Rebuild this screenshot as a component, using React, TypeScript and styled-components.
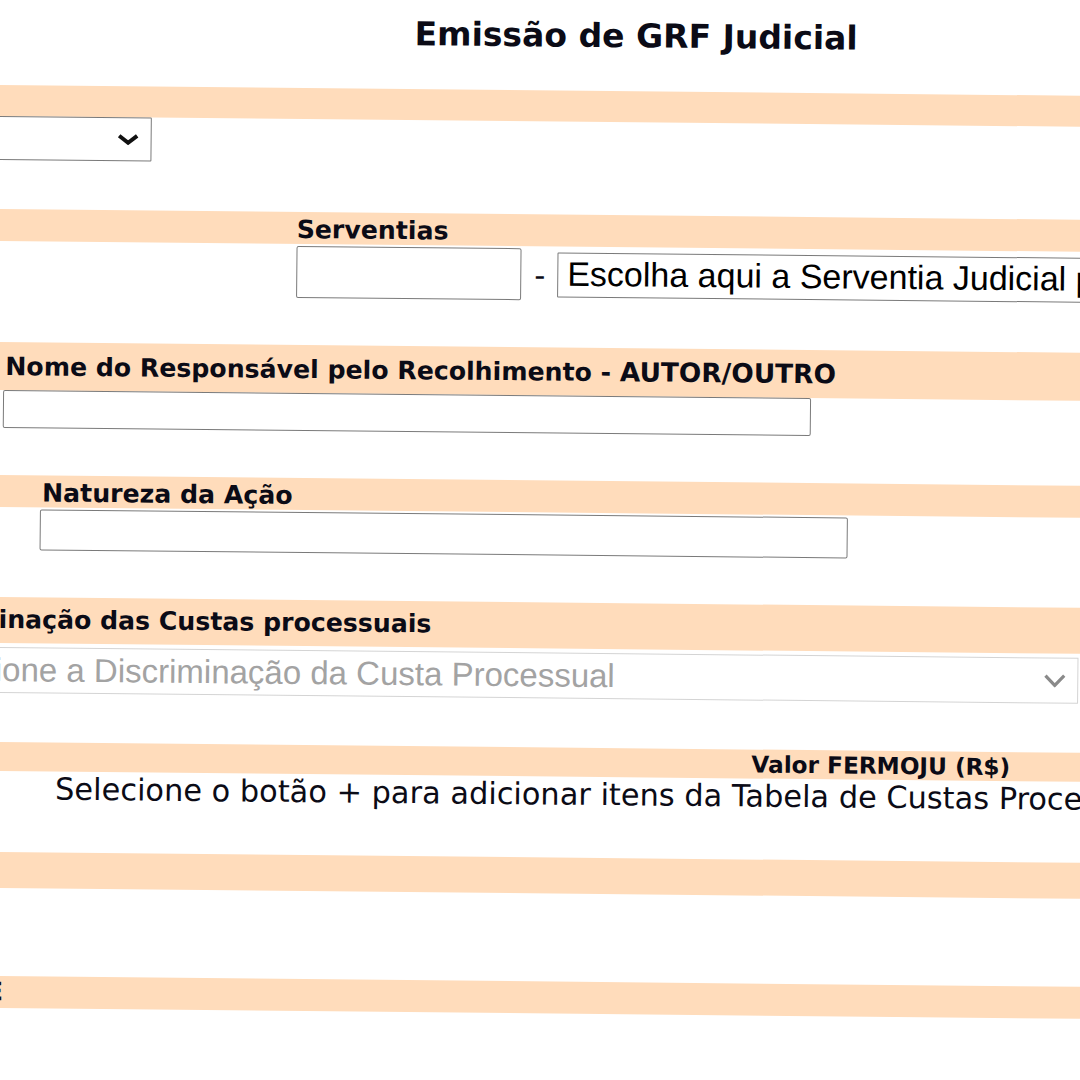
import React from "react";
import styled, { createGlobalStyle } from "styled-components";

const GlobalStyle = createGlobalStyle`
  html, body { margin: 0; padding: 0; background: #ffffff; }
  body { overflow: hidden; }
`;

const Viewport = styled.div`
  width: 1080px;
  height: 1080px;
  overflow: hidden;
  background: #ffffff;
`;

const Page = styled.div`
  width: 1513px;
  margin-left: -120px;
  padding-top: 11px;
  display: flex;
  flex-direction: column;
  transform: rotate(0.57deg);
  transform-origin: 120px 0;
  font-family: "DejaVu Sans", Verdana, sans-serif;
  color: #0b0b16;
`;

const Title = styled.h1`
  margin: 0;
  height: 38px;
  font-size: 33px;
  line-height: 38px;
  font-weight: bold;
  text-align: center;
`;

const Band = styled.div<{ $mt: number; $h: number; $pt?: number; $pl?: number }>`
  margin-top: ${(p) => p.$mt}px;
  height: ${(p) => p.$h}px;
  padding-top: ${(p) => p.$pt ?? 0}px;
  padding-left: ${(p) => p.$pl ?? 0}px;
  box-sizing: border-box;
  background: #ffdcbb;
  display: flex;
  align-items: center;
  flex-shrink: 0;
`;

const Label = styled.span<{ $size?: number }>`
  font-size: ${(p) => p.$size ?? 25.2}px;
  font-weight: bold;
  line-height: 1;
  white-space: nowrap;
`;

const Accent = styled.span`
  font-size: 26.4px;
`;

const EndCell = styled.div<{ $w: number }>`
  width: ${(p) => p.$w}px;
  display: flex;
  justify-content: flex-end;
  flex-shrink: 0;
`;

const FieldRow = styled.div<{ $mt?: number; $pl: number }>`
  margin-top: ${(p) => p.$mt ?? 0}px;
  padding-left: ${(p) => p.$pl}px;
  display: flex;
  align-items: center;
  flex-shrink: 0;
`;

const TextInput = styled.input<{ $w: number; $h: number }>`
  width: ${(p) => p.$w}px;
  height: ${(p) => p.$h}px;
  box-sizing: border-box;
  margin: 0;
  padding: 0;
  border: 1px solid #7a7a7a;
  border-radius: 2px;
  background: #ffffff;
  display: block;
  flex-shrink: 0;
  outline: none;
`;

const SelectBox = styled.div<{ $w: number; $h: number; $muted?: boolean; $size?: number }>`
  width: ${(p) => p.$w}px;
  height: ${(p) => p.$h}px;
  box-sizing: border-box;
  border: 1px solid ${(p) => (p.$muted ? "#d4d4d4" : "#7a7a7a")};
  border-radius: ${(p) => (p.$muted ? "0" : "1px")};
  background: #ffffff;
  display: flex;
  align-items: center;
  padding: 0 11px 0 9px;
  flex-shrink: 0;
  overflow: hidden;
  font-family: "Liberation Sans", Arial, sans-serif;
  font-size: ${(p) => p.$size ?? 33}px;
  color: ${(p) => (p.$muted ? "#a3a3a3" : "#000000")};
`;

const SelectText = styled.span`
  flex: 1;
  white-space: nowrap;
  overflow: hidden;
  line-height: 1.15;
`;

const Dash = styled.span`
  font-family: "Liberation Sans", Arial, sans-serif;
  font-size: 33px;
  margin: 0 12px 0 13px;
  line-height: 1;
`;

const Message = styled.div<{ $pl: number }>`
  padding-left: ${(p) => p.$pl}px;
  font-size: 30.4px;
  line-height: 35px;
  height: 35px;
  white-space: nowrap;
  flex-shrink: 0;
`;

const Chevron: React.FC<{ color: string; stroke: number; h: number }> = ({ color, stroke, h }) => (
  <svg width="23" height={h} viewBox={`0 0 23 ${h}`} style={{ flexShrink: 0 }}>
    <path
      d={`M${stroke / 2 + 0.5} ${stroke / 2 + 0.5} L11.5 ${h - stroke / 2 - 0.5} L${22.5 - stroke / 2} ${stroke / 2 + 0.5}`}
      fill="none"
      stroke={color}
      strokeWidth={stroke}
      strokeLinecap="butt"
      strokeLinejoin="miter"
    />
  </svg>
);

export default function App() {
  return (
    <Viewport>
      <GlobalStyle />
      <Page>
        <Title>Emissão de GRF Judicial</Title>

        <Band $mt={36} $h={31} />
        <FieldRow $pl={13}>
          <SelectBox $w={260} $h={44}>
            <SelectText />
            <Chevron color="#111" stroke={4} h={12} />
          </SelectBox>
        </FieldRow>

        <Band $mt={49} $h={32} $pt={3} $pl={419}>
          <Label>Serventias</Label>
        </Band>
        <FieldRow $mt={2} $pl={419}>
          <TextInput $w={225} $h={52} />
          <Dash>-</Dash>
          <SelectBox $w={760} $h={45} $size={34}>
            <SelectText>Escolha aqui a Serventia Judicial para a qual a guia será emitida</SelectText>
          </SelectBox>
        </FieldRow>

        <Band $mt={47} $h={48} $pl={129}>
          <Label>
            Nome do Responsável pelo Recolhimento - <Accent>AUTOR/OUTRO</Accent>
          </Label>
        </Band>
        <FieldRow $pl={127}>
          <TextInput $w={808} $h={38} />
        </FieldRow>

        <Band $mt={47} $h={32} $pt={4} $pl={167}>
          <Label>Natureza da Ação</Label>
        </Band>
        <FieldRow $mt={2} $pl={165}>
          <TextInput $w={808} $h={41} />
        </FieldRow>

        <Band $mt={47} $h={46} $pl={18}>
          <Label>Discriminação das Custas processuais</Label>
        </Band>
        <FieldRow $mt={4} $pl={29}>
          <SelectBox $w={1176} $h={46} $muted>
            <SelectText>Selecione a Discriminação da Custa Processual</SelectText>
            <Chevron color="#8a8a8a" stroke={3.2} h={14} />
          </SelectBox>
        </FieldRow>

        <Band $mt={49} $h={29} $pl={879}>
          <Label $size={23.2}>Valor FERMOJU (R$)</Label>
        </Band>
        <Message $pl={183}>
          Selecione o botão + para adicionar itens da Tabela de Custas Processuais
        </Message>

        <Band $mt={46} $h={36} />

        <Band $mt={88} $h={32}>
          <EndCell $w={133}>
            <Label>Valor Total da GRF - FERMOJU E</Label>
          </EndCell>
        </Band>
      </Page>
    </Viewport>
  );
}
